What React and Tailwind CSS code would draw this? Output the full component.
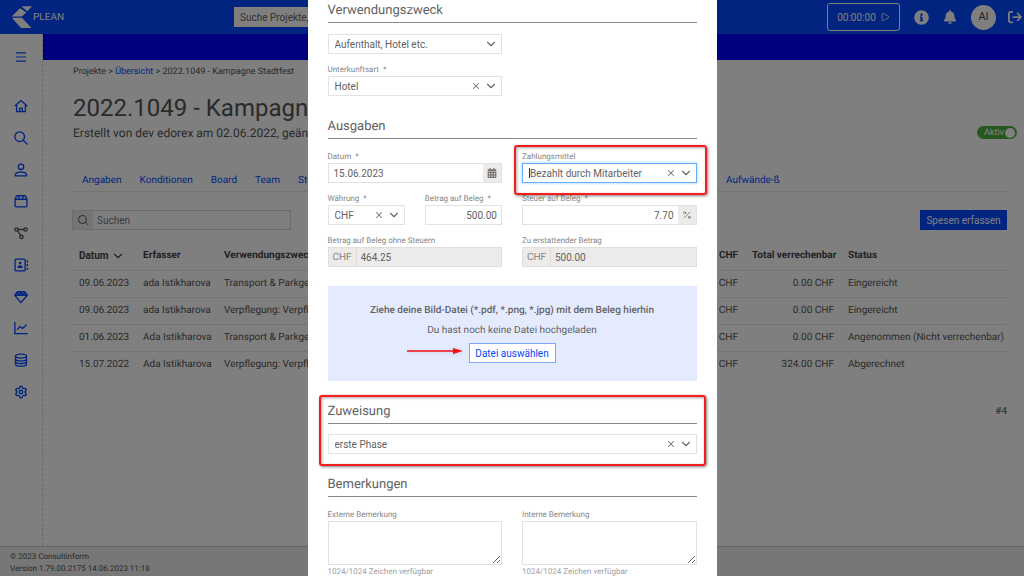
import React, { useState } from 'react';
import { ChevronDown, Menu, Percent, Play, Search, Settings, X } from 'lucide-react';
import { FaBell, FaCalendarAlt, FaInfoCircle } from 'react-icons/fa';
import { FaArrowRightFromBracket } from 'react-icons/fa6';

const LineIcon = ({ children }) => (
  <svg viewBox="0 0 16 16" className="size-3.5" fill="none" stroke="currentColor" strokeWidth="1.500" strokeLinejoin="round" strokeLinecap="round">
    {children}
  </svg>
);

const HouseIcon = () => (
  <LineIcon>
    <path d="M1.200 7.800 8 1.800l6.800 6M3 7v7.500h10V7M6.500 14.500v-4h3v4" />
  </LineIcon>
);

const SearchIcon = () => (
  <LineIcon>
    <circle cx="6.500" cy="6.500" r="5.500" />
    <path d="M10.500 10.500 15 15" />
  </LineIcon>
);

const PersonIcon = () => (
  <LineIcon>
    <circle cx="8" cy="4.300" r="3.100" />
    <path d="M1.500 14.700c0-3 2.500-4.200 5-4.200h3c2.500 0 5 1.200 5 4.200z" />
  </LineIcon>
);

const BoxIcon = () => (
  <LineIcon>
    <path d="M3 2h10l1.800 4v7.500a1.300 1.300 0 0 1-1.300 1.300h-11a1.300 1.300 0 0 1-1.300-1.300V6zM1.200 6h13.600M5.700 2v4M10.300 2v4" />
  </LineIcon>
);

const NetworkIcon = () => (
  <LineIcon>
    <circle cx="2.800" cy="4" r="1.900" />
    <circle cx="13.200" cy="4" r="1.900" />
    <circle cx="8.500" cy="12.500" r="1.900" />
    <path d="M4.800 4h6.400M4.500 5.500 7.500 10.800" />
  </LineIcon>
);

const ContactsIcon = () => (
  <LineIcon>
    <rect x="1.200" y="1.200" width="11.500" height="13.600" rx="1.200" />
    <circle cx="7" cy="5.800" r="1.500" fill="currentColor" stroke="none" />
    <path d="M4 11.300c0-2 1.200-3 3-3s3 1 3 3z" fill="currentColor" stroke="none" />
    <path d="M15.200 3v1.500M15.200 7.200v1.500M15.200 11.500V13" />
  </LineIcon>
);

const GemIcon = () => (
  <LineIcon>
    <path d="M4 2h8l3.200 4L8 14.500.8 6zM.8 6h14.400M4 2l1.500 4L8 2.800 10.500 6 12 2" />
  </LineIcon>
);

const ChartIcon = () => (
  <LineIcon>
    <path d="M1 1.500v13h14M4 9.500l2.800-3.300 3 2.300L14 4.500" />
  </LineIcon>
);

const DatabaseIcon = () => (
  <LineIcon>
    <ellipse cx="8" cy="3.500" rx="6.300" ry="2.300" />
    <path d="M1.700 3.500v9c0 1.400 2.800 2.500 6.300 2.500s6.300-1.100 6.300-2.500v-9M1.700 6.500C1.700 7.900 4.500 9 8 9s6.300-1.100 6.300-2.500M1.700 9.500c0 1.400 2.800 2.500 6.300 2.500s6.300-1.100 6.300-2.500" />
  </LineIcon>
);

const GearIcon = () => <Settings className="size-3.5" strokeWidth={2.3} />;

const navItems = [
  { label: 'Start', Icon: HouseIcon },
  { label: 'Suche', Icon: SearchIcon },
  { label: 'Personen', Icon: PersonIcon },
  { label: 'Projekte', Icon: BoxIcon },
  { label: 'Prozesse', Icon: NetworkIcon, muted: true },
  { label: 'Kontakte', Icon: ContactsIcon },
  { label: 'Leistungen', Icon: GemIcon },
  { label: 'Auswertungen', Icon: ChartIcon },
  { label: 'Stammdaten', Icon: DatabaseIcon },
  { label: 'Einstellungen', Icon: GearIcon }
];

const tabs = ['Angaben', 'Konditionen', 'Board', 'Team', 'Stunden'];

const expenses = [
  { date: '09.06.2023', author: 'ada Istikharova', purpose: 'Transport & Parkgebühr', total: '0.00 CHF', status: 'Eingereicht' },
  { date: '09.06.2023', author: 'ada Istikharova', purpose: 'Verpflegung: Verpflegung', total: '0.00 CHF', status: 'Eingereicht' },
  { date: '01.06.2023', author: 'Ada Istikharova', purpose: 'Transport & Parkgebühr', total: '0.00 CHF', status: 'Angenommen (Nicht verrechenbar)' },
  { date: '15.07.2022', author: 'Ada Istikharova', purpose: 'Verpflegung: Verpflegung', total: '324.00 CHF', status: 'Abgerechnet' }
];

const Logo = () => (
  <a href="#start" className="flex items-center text-[10px] text-white">
    <svg viewBox="0 0 22 24" className="h-6 w-[22px]" fill="currentColor">
      <path d="M10.500 1.300H21l-4.700 5z" />
      <path d="M.8 11.500 9 3.200l6.300 4.300-4.500 4z" />
      <path d="M.8 12.800H11L20.500 23H10z" />
    </svg>
    PLEAN
  </a>
);

const Header = () => (
  <header className="flex h-[34px] items-center bg-[#0049ff] pr-0.5 pl-[11px]">
    <div className="w-[223px] shrink-0">
      <Logo />
    </div>
    <input
      type="search"
      aria-label="Suche"
      placeholder="Suche Projekte, Kontakte"
      className="h-5 w-[300px] bg-white px-1.5 text-[10px] placeholder:text-[#666]"
    />
    <div className="ml-auto flex shrink-0 items-center text-white">
      <button className="flex h-7 w-[73px] items-center justify-center gap-1 rounded-[3px] border border-white text-[10px]">
        00:00:00
        <Play className="size-2.5" strokeWidth={2} />
      </button>
      <button aria-label="Info" className="ml-3.5">
        <FaInfoCircle className="size-[15px]" />
      </button>
      <button aria-label="Benachrichtigungen" className="ml-3.5">
        <FaBell className="size-3.5" />
      </button>
      <button className="ml-3.5 size-[25px] rounded-full bg-white text-[11px] text-[#444]">AI</button>
      <button aria-label="Abmelden" className="ml-3">
        <FaArrowRightFromBracket className="size-3.5" />
      </button>
    </div>
  </header>
);

const Sidebar = () => (
  <nav className="w-[43px] shrink-0 border-r border-dashed border-[#d0d0d0] text-[#0049ff]">
    <button aria-label="Menü" className="mx-auto mt-4 block">
      <Menu className="size-3.5" strokeWidth={2} />
    </button>
    <div className="mt-[35px] flex h-[300px] flex-col items-center justify-between">
      {navItems.map(({ label, Icon, muted }) => (
        <a key={label} href={`#${label}`} aria-label={label} className={muted ? 'text-[#545454]' : ''}>
          <Icon />
        </a>
      ))}
    </div>
  </nav>
);

const ExpenseTable = () => (
  <table className="mt-3 w-full table-fixed text-[10px]">
    <colgroup>
      <col className="w-16" />
      <col className="w-[81px]" />
      <col />
      <col className="w-20" />
      <col className="w-24" />
      <col className="w-[166px]" />
    </colgroup>
    <thead>
      <tr className="h-7 border-b border-[#e8e8e8] text-left whitespace-nowrap text-[#444]">
        <th className="px-[7px] font-bold">
          <button className="flex items-center gap-0.5">
            Datum
            <ChevronDown className="size-3.5 shrink-0" />
          </button>
        </th>
        <th className="px-[7px] font-bold">Erfasser</th>
        <th className="px-[7px] font-bold">Verwendungszweck</th>
        <th className="px-[7px] text-right font-bold">CHF</th>
        <th className="px-[7px] text-right font-bold">Total verrechenbar</th>
        <th className="px-[7px] font-bold">Status</th>
      </tr>
    </thead>
    <tbody>
      {expenses.map((row, index) => (
        <tr key={index} className="h-[27px] border-b border-[#e8e8e8] whitespace-nowrap last:border-b-0">
          <td className="px-[7px]">{row.date}</td>
          <td className="px-[7px]">{row.author}</td>
          <td className="px-[7px]">{row.purpose}</td>
          <td className="px-[7px] text-right">CHF</td>
          <td className="px-[7px] text-right">{row.total}</td>
          <td className="px-[7px]">{row.status}</td>
        </tr>
      ))}
    </tbody>
  </table>
);

const ProjectPage = () => (
  <main className="min-w-0 flex-1">
    <div className="h-[26px] bg-[#0000ff]" />
    <div className="pt-1 pr-[7px] pl-[30px]">
      <p className="text-[9px] leading-4">
        Projekte &gt; <a href="#uebersicht" className="text-[#0049ff]">Übersicht</a> &gt; 2022.1049 - Kampagne Stadtfest
      </p>
      <h1 className="mt-3.5 text-[24px] leading-7">2022.1049 - Kampagne</h1>
      <div className="flex h-[21px] items-center justify-between">
        <p className="text-[12px]">Erstellt von dev edorex am 02.06.2022, geändert</p>
        <label className="relative flex h-[13px] w-10 items-center justify-between rounded-full bg-[#4caf3c] pr-0.5 pl-[7px] text-[9px] leading-3 text-white">
          <input type="checkbox" defaultChecked className="sr-only" />
          Aktiv
          <span className="size-2.5 shrink-0 rounded-full bg-white" />
        </label>
      </div>
    </div>

    <div className="mt-[27px] pr-[17px] pl-[29px]">
      <nav className="flex h-[22px] items-center border-b border-[#e8e8e8] pl-2.5 text-[10px] text-[#0049ff]">
        <div className="flex flex-1 gap-[18px]">
          {tabs.map((tab) => (
            <a key={tab} href={`#${tab}`}>{tab}</a>
          ))}
        </div>
        <a href="#aufwaende" className="w-[281px] shrink-0">Aufwände-ß</a>
      </nav>
      <div className="mt-[18px] flex h-5 justify-between">
        <div className="flex w-[219px] border border-[#d8d8d8]">
          <span className="flex w-5 shrink-0 items-center justify-center bg-[#ebeae8]">
            <Search className="size-3" />
          </span>
          <input type="text" aria-label="Suchen" placeholder="Suchen" className="min-w-0 flex-1 px-1 text-[10px] placeholder:text-[#777]" />
        </div>
        <button className="w-[87px] bg-[#0049ff] text-[10px] text-white">Spesen erfassen</button>
      </div>
      <ExpenseTable />
      <p className="mt-[26px] text-right text-[10px]">#4</p>
    </div>
  </main>
);

const SectionTitle = ({ children }) => (
  <h2 className="h-[23px] border-b border-[#8a8a8a] text-[13px] leading-[22px]">{children}</h2>
);

const Field = ({ id, label, required, children }) => (
  <div className="flex min-w-0 flex-col">
    <label htmlFor={id} className="flex gap-1 text-[8px] leading-3 text-[#868686]">
      {label}
      {required && <span>*</span>}
    </label>
    {children}
  </div>
);

const SelectBox = ({ id, value, label, clearable = true, focused = false }) => {
  const [current, setCurrent] = useState(value);

  return (
    <div className={`flex h-5 items-center border bg-white pl-1.5 ${focused ? 'border-[#66afff] shadow-[0_0_3px_#9cccff]' : 'border-[#e2e2e2]'}`}>
      {focused && <span className="h-2.5 w-px bg-[#333]" />}
      <select
        id={id}
        aria-label={label}
        value={current}
        onChange={(e) => setCurrent(e.target.value)}
        className="h-full min-w-0 flex-1 appearance-none bg-transparent text-[10px] outline-none"
      >
        <option value={value}>{value}</option>
        <option value=""></option>
      </select>
      {clearable && (
        <button type="button" aria-label="Auswahl löschen" onClick={() => setCurrent('')} className="mr-[3px] text-[#777]">
          <X className="size-2.5" strokeWidth={2.5} />
        </button>
      )}
      <ChevronDown className="mr-[3px] size-3.5 shrink-0 text-[#666]" strokeWidth={2} />
    </div>
  );
};

const ReadonlyAmount = ({ id, value }) => (
  <div className="flex h-5 items-center border border-[#e0dfdd] bg-[#ecebe9] text-[10px]">
    <span className="flex h-full w-7 shrink-0 items-center justify-center border-r border-[#dcdbd9] text-[#8a8480]">CHF</span>
    <input id={id} readOnly value={value} className="min-w-0 flex-1 px-1" />
  </div>
);

const Remark = ({ id, label }) => (
  <div>
    <Field id={id} label={label}>
      <textarea id={id} className="block h-11 w-full resize border border-[#e2e2e2] p-1 text-[10px]" />
    </Field>
    <p className="mt-[3px] text-[8px] leading-2 text-[#a0a0a0]">1024/1024 Zeichen verfügbar</p>
  </div>
);

// Red frame drawn around a highlighted part of the form
const Highlight = ({ className }) => (
  <div className={`pointer-events-none absolute rounded-[3px] border-2 border-[#f51d1d] shadow-[1px_1px_3px_rgba(0,0,0,0.5),inset_1px_1px_3px_rgba(0,0,0,0.35)] ${className}`} />
);

const ExpenseForm = () => (
  <form className="h-full w-[409px] max-w-full overflow-hidden bg-white px-5 text-[#626262]">
    <SectionTitle>Verwendungszweck</SectionTitle>
    <div className="mt-[11px] grid grid-cols-2 gap-x-5">
      <div className="flex flex-col gap-2.5">
        <SelectBox label="Verwendungszweck" value="Aufenthalt, Hotel etc." clearable={false} />
        <Field id="unterkunft" label="Unterkunftsart" required>
          <SelectBox id="unterkunft" value="Hotel" />
        </Field>
      </div>
    </div>

    <div className="mt-5">
      <SectionTitle>Ausgaben</SectionTitle>
    </div>
    <div className="mt-3 grid grid-cols-2 gap-x-5 gap-y-2.5">
      <Field id="datum" label="Datum" required>
        <div className="flex h-5 border border-[#e2e2e2]">
          <input id="datum" defaultValue="15.06.2023" className="min-w-0 flex-1 px-[5px] text-[10px]" />
          <button type="button" aria-label="Kalender" className="flex w-[18px] items-center justify-center bg-[#ecebe9] text-[#7a7470]">
            <FaCalendarAlt className="size-2.5" />
          </button>
        </div>
      </Field>
      <div className="relative">
        <Field id="zahlungsmittel" label="Zahlungsmittel">
          <SelectBox id="zahlungsmittel" value="Bezahlt durch Mitarbeiter" focused />
        </Field>
        <Highlight className="-top-[6px] -right-2.5 -bottom-3 -left-2" />
      </div>
      <div className="grid grid-cols-2 gap-x-5">
        <Field id="waehrung" label="Währung" required>
          <SelectBox id="waehrung" value="CHF" />
        </Field>
        <Field id="betrag" label="Betrag auf Beleg" required>
          <input id="betrag" defaultValue="500.00" className="h-5 border border-[#e2e2e2] px-1 text-right text-[10px]" />
        </Field>
      </div>
      <Field id="steuer" label="Steuer auf Beleg" required>
        <div className="flex h-5 border border-[#e2e2e2]">
          <input id="steuer" defaultValue="7.70" className="min-w-0 flex-1 px-1 text-right text-[10px]" />
          <span className="flex w-[18px] items-center justify-center bg-[#ecebe9] text-[#7a7470]">
            <Percent className="size-2.5" />
          </span>
        </div>
      </Field>
      <Field id="netto" label="Betrag auf Beleg ohne Steuern">
        <ReadonlyAmount id="netto" value="464.25" />
      </Field>
      <Field id="erstattung" label="Zu erstattender Betrag">
        <ReadonlyAmount id="erstattung" value="500.00" />
      </Field>
    </div>

    <div className="mt-[19px] flex h-[95px] flex-col items-center bg-[#e5ebff] pt-[17px] text-[10px]">
      <p className="leading-4 font-medium">Ziehe deine Bild-Datei (*.pdf, *.png, *.jpg) mit dem Beleg hierhin</p>
      <p className="mt-1 leading-4">Du hast noch keine Datei hochgeladen</p>
      <div className="relative mt-1">
        <button type="button" className="h-5 w-[87px] border border-[#7fa3ff] bg-white text-[#0049ff]">Datei auswählen</button>
        <svg viewBox="0 0 56 8" className="absolute top-1 right-full mr-1.5 h-2 w-14 drop-shadow-sm">
          <path d="M0 4h48" stroke="#f51010" strokeWidth="1.500" />
          <path d="M46 1l10 3-10 3z" fill="#f51010" />
        </svg>
      </div>
    </div>

    <div className="relative mt-5">
      <SectionTitle>Zuweisung</SectionTitle>
      <div className="mt-2.5">
        <SelectBox label="Zuweisung" value="erste Phase" />
      </div>
      <Highlight className="-inset-x-[9px] -top-[6px] -bottom-3" />
    </div>

    <div className="mt-5">
      <SectionTitle>Bemerkungen</SectionTitle>
    </div>
    <div className="mt-3 grid grid-cols-2 gap-x-5">
      <Remark id="extern" label="Externe Bemerkung" />
      <Remark id="intern" label="Interne Bemerkung" />
    </div>
  </form>
);

export default function App() {
  return (
    <div className="flex h-screen flex-col overflow-hidden bg-white font-['Roboto','Liberation_Sans',sans-serif] text-[#545454] [text-rendering:geometricPrecision]">
      <Header />
      <div className="flex min-h-0 flex-1">
        <Sidebar />
        <ProjectPage />
      </div>
      <footer className="h-[30px] shrink-0 border-t border-[#c8c8c8] bg-[#efefef] pt-1 pl-2.5 text-[8px] leading-3">
        <p>© 2023 Consultinform</p>
        <p>Version 1.79.00.2175 14.06.2023 11:18</p>
      </footer>

      {/* Dialog */}
      <div role="dialog" aria-label="Spesen erfassen" className="fixed inset-0 flex justify-center bg-black/50">
        <ExpenseForm />
      </div>
    </div>
  );
}
